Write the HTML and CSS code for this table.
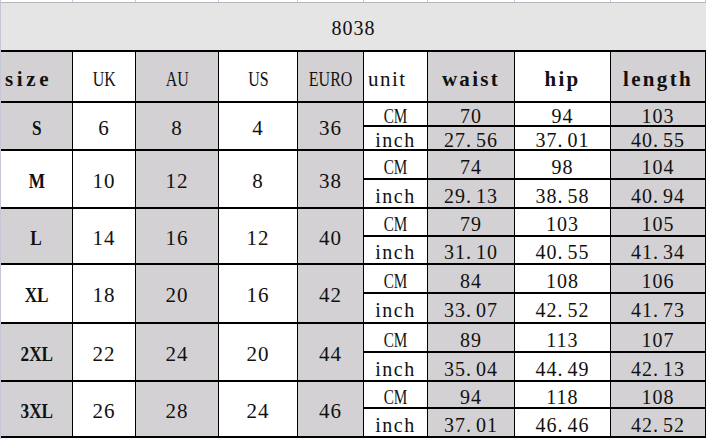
FILE: index.html
```html
<!DOCTYPE html>
<html>
<head>
<meta charset="utf-8">
<link rel="stylesheet" href="styles.css">
</head>
<body>
<div class="frame">
  <div class="strip">
    <i></i><i></i><i></i><i></i><i></i><i></i><i></i><i></i><i></i>
  </div>
  <div class="title"><span class="num">8038</span></div>
  <div class="sheet">
    <div class="c g left"><span class="b wide">size</span></div>
    <div class="c"><span class="cap">UK</span></div>
    <div class="c g"><span class="cap">AU</span></div>
    <div class="c"><span class="cap">US</span></div>
    <div class="c g"><span class="cap">EURO</span></div>
    <div class="c left"><span class="low">unit</span></div>
    <div class="c g"><span class="b">waist</span></div>
    <div class="c"><span class="b">hip</span></div>
    <div class="c g"><span class="b">length</span></div>

    <div class="c g m"><span class="lbl">S</span></div>
    <div class="c m"><span class="num">6</span></div>
    <div class="c g m"><span class="num">8</span></div>
    <div class="c m"><span class="num">4</span></div>
    <div class="c g m"><span class="num">36</span></div>
    <div class="c s"><span class="cap">CM</span></div>
    <div class="c g s"><span class="num">70</span></div>
    <div class="c s"><span class="num">94</span></div>
    <div class="c g s"><span class="num">103</span></div>
    <div class="c s"><span class="low">inch</span></div>
    <div class="c g s"><span class="num">27<span class="dot">.</span>56</span></div>
    <div class="c s"><span class="num">37<span class="dot">.</span>01</span></div>
    <div class="c g s"><span class="num">40<span class="dot">.</span>55</span></div>

    <div class="c m"><span class="lbl">M</span></div>
    <div class="c m"><span class="num">10</span></div>
    <div class="c g m"><span class="num">12</span></div>
    <div class="c m"><span class="num">8</span></div>
    <div class="c g m"><span class="num">38</span></div>
    <div class="c s"><span class="cap">CM</span></div>
    <div class="c g s"><span class="num">74</span></div>
    <div class="c s"><span class="num">98</span></div>
    <div class="c g s"><span class="num">104</span></div>
    <div class="c s"><span class="low">inch</span></div>
    <div class="c g s"><span class="num">29<span class="dot">.</span>13</span></div>
    <div class="c s"><span class="num">38<span class="dot">.</span>58</span></div>
    <div class="c g s"><span class="num">40<span class="dot">.</span>94</span></div>

    <div class="c g m"><span class="lbl">L</span></div>
    <div class="c m"><span class="num">14</span></div>
    <div class="c g m"><span class="num">16</span></div>
    <div class="c m"><span class="num">12</span></div>
    <div class="c g m"><span class="num">40</span></div>
    <div class="c s"><span class="cap">CM</span></div>
    <div class="c g s"><span class="num">79</span></div>
    <div class="c s"><span class="num">103</span></div>
    <div class="c g s"><span class="num">105</span></div>
    <div class="c s"><span class="low">inch</span></div>
    <div class="c g s"><span class="num">31<span class="dot">.</span>10</span></div>
    <div class="c s"><span class="num">40<span class="dot">.</span>55</span></div>
    <div class="c g s"><span class="num">41<span class="dot">.</span>34</span></div>

    <div class="c m"><span class="lbl">XL</span></div>
    <div class="c m"><span class="num">18</span></div>
    <div class="c g m"><span class="num">20</span></div>
    <div class="c m"><span class="num">16</span></div>
    <div class="c g m"><span class="num">42</span></div>
    <div class="c s"><span class="cap">CM</span></div>
    <div class="c g s"><span class="num">84</span></div>
    <div class="c s"><span class="num">108</span></div>
    <div class="c g s"><span class="num">106</span></div>
    <div class="c s"><span class="low">inch</span></div>
    <div class="c g s"><span class="num">33<span class="dot">.</span>07</span></div>
    <div class="c s"><span class="num">42<span class="dot">.</span>52</span></div>
    <div class="c g s"><span class="num">41<span class="dot">.</span>73</span></div>

    <div class="c g m"><span class="lbl">2XL</span></div>
    <div class="c m"><span class="num">22</span></div>
    <div class="c g m"><span class="num">24</span></div>
    <div class="c m"><span class="num">20</span></div>
    <div class="c g m"><span class="num">44</span></div>
    <div class="c s"><span class="cap">CM</span></div>
    <div class="c g s"><span class="num">89</span></div>
    <div class="c s"><span class="num">113</span></div>
    <div class="c g s"><span class="num">107</span></div>
    <div class="c s"><span class="low">inch</span></div>
    <div class="c g s"><span class="num">35<span class="dot">.</span>04</span></div>
    <div class="c s"><span class="num">44<span class="dot">.</span>49</span></div>
    <div class="c g s"><span class="num">42<span class="dot">.</span>13</span></div>

    <div class="c g m"><span class="lbl">3XL</span></div>
    <div class="c m"><span class="num">26</span></div>
    <div class="c g m"><span class="num">28</span></div>
    <div class="c m"><span class="num">24</span></div>
    <div class="c g m"><span class="num">46</span></div>
    <div class="c s"><span class="cap">CM</span></div>
    <div class="c g s"><span class="num">94</span></div>
    <div class="c s"><span class="num">118</span></div>
    <div class="c g s"><span class="num">108</span></div>
    <div class="c s"><span class="low">inch</span></div>
    <div class="c g s"><span class="num">37<span class="dot">.</span>01</span></div>
    <div class="c s"><span class="num">46<span class="dot">.</span>46</span></div>
    <div class="c g s"><span class="num">42<span class="dot">.</span>52</span></div>
  </div>
</div>
</body>
</html>
```
FILE: styles.css
```css
html, body {
  margin: 0;
  padding: 0;
  background: #ffffff;
}

body {
  width: 708px;
  height: 439px;
  overflow: hidden;
  font-family: "Liberation Serif", "Times New Roman", serif;
  color: #111;
}

.frame {
  width: 706px;
  border-left: 1px solid #c6c6d6;
  height: 439px;
  box-sizing: border-box;
}

.strip {
  display: grid;
  grid-template-columns: 71px 62px 82px 78px 65px 63px 86px 95px 94px;
  column-gap: 1px;
  height: 2px;
  background: #c8c8d0;
  border-bottom: 1px solid #b6b6be;
}

.strip i {
  background: #fff;
}

.title {
  height: 47px;
  background: #e5e5e5;
  display: flex;
  align-items: center;
  justify-content: center;
  padding-top: 3px;
  box-sizing: border-box;
  font-size: 20px;
  line-height: 20px;
}

.sheet {
  display: grid;
  grid-template-columns: 71px 62px 82px 78px 65px 63px 86px 95px 94px;
  grid-template-rows: 49px 22px 22px 27px 27px 26px 26px 27px 28px 27px 27px 25px 27px;
  column-gap: 1px;
  row-gap: 2px;
  background: #000;
  border-top: 2px solid #000;
  border-bottom: 2px solid #000;
  border-right: 1px solid #000;
  width: 705px;
  box-sizing: border-box;
}

.c {
  background: #fff;
  display: flex;
  align-items: center;
  justify-content: center;
  font-size: 21px;
  line-height: 20px;
  padding-top: 4px;
  box-sizing: border-box;
  white-space: nowrap;
}

.g {
  background: #d3d1d3;
}

.left {
  justify-content: flex-start;
  padding-left: 4px;
}

.m {
  grid-row: span 2;
  padding-top: 3px;
}

.s {
  font-size: 20px;
  line-height: 18px;
  padding-top: 4px;
}

.num {
  letter-spacing: 1px;
}

.dot {
  margin-right: 4px;
}

.cap {
  display: inline-block;
  transform: scaleX(0.76);
}

.low {
  letter-spacing: 1.5px;
}

.b {
  font-weight: bold;
  letter-spacing: 2.3px;
}

.b.wide {
  letter-spacing: 3.6px;
}

.lbl {
  display: inline-block;
  font-weight: bold;
  transform: scaleX(0.82);
}
```
